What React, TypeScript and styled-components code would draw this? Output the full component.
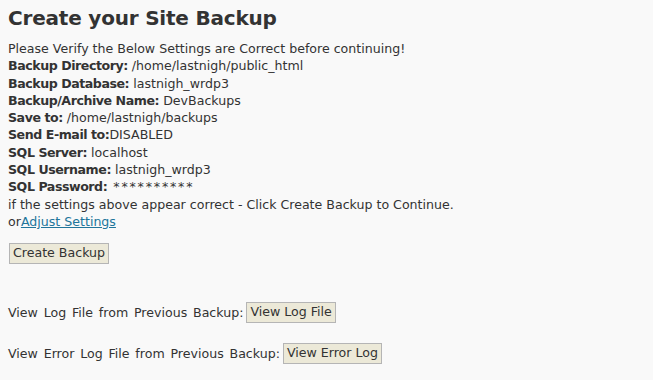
import * as React from "react";
import styled, { createGlobalStyle } from "styled-components";

const GlobalStyle = createGlobalStyle`
  html, body {
    margin: 0;
    background: #f9f9f9;
  }
  body {
    padding: 0 8px;
    font-family: "DejaVu Sans", Verdana, sans-serif;
    font-size: 12.6px;
    line-height: 17.3px;
    color: #333;
  }
`;

const Page = styled.div`
  display: flex;
  flex-direction: column;
`;

const Title = styled.h2`
  margin: 5px 0 9px;
  font-size: 20px;
  line-height: 26px;
  letter-spacing: -0.2px;
  font-weight: bold;
  color: #333;
`;

const Summary = styled.div`
  display: flex;
  flex-direction: column;
`;

const Label = styled.b`
  font-weight: bold;
  letter-spacing: -0.45px;
`;

const Mask = styled.span`
  margin-left: 2px;
  letter-spacing: 1.8px;
`;

const SettingsLink = styled.a`
  color: #21759b;
  text-decoration: underline;
`;

const Button = styled.button`
  font-family: inherit;
  font-size: 12.6px;
  line-height: 16px;
  word-spacing: 0;
  color: #333;
  background: #ece9d8;
  border: 1px solid #b5b5b5;
  border-radius: 0;
  padding: 1px 3px 2px;
  margin: 0 0 0 1px;
`;

const ActionRow = styled.div<{ $top: number }>`
  display: flex;
  align-items: center;
  gap: 2px;
  word-spacing: 1.8px;
  margin-top: ${(p) => p.$top}px;
`;

const settings: [string, string, boolean?][] = [
  ["Backup Directory:", "/home/lastnigh/public_html"],
  ["Backup Database:", "lastnigh_wrdp3"],
  ["Backup/Archive Name:", "DevBackups"],
  ["Save to:", "/home/lastnigh/backups"],
  ["Send E-mail to:", "DISABLED", true],
  ["SQL Server:", "localhost"],
  ["SQL Username:", "lastnigh_wrdp3"],
];

export default function App() {
  return (
    <Page>
      <GlobalStyle />
      <Title>Create your Site Backup</Title>
      <Summary>
        <div>Please Verify the Below Settings are Correct before continuing!</div>
        {settings.map(([label, value, tight]) => (
          <div key={label}>
            <Label>{label}</Label>
            {tight ? "" : " "}
            {value}
          </div>
        ))}
        <div>
          <Label>SQL Password:</Label> <Mask>**********</Mask>
        </div>
        <div>if the settings above appear correct - Click Create Backup to Continue.</div>
        <div>
          or<SettingsLink href="#">Adjust Settings</SettingsLink>
        </div>
      </Summary>
      <ActionRow $top={13}>
        <Button>Create Backup</Button>
      </ActionRow>
      <ActionRow $top={38}>
        <span>View Log File from Previous Backup:</span>
        <Button>View Log File</Button>
      </ActionRow>
      <ActionRow $top={20}>
        <span>View Error Log File from Previous Backup:</span>
        <Button>View Error Log</Button>
      </ActionRow>
    </Page>
  );
}
